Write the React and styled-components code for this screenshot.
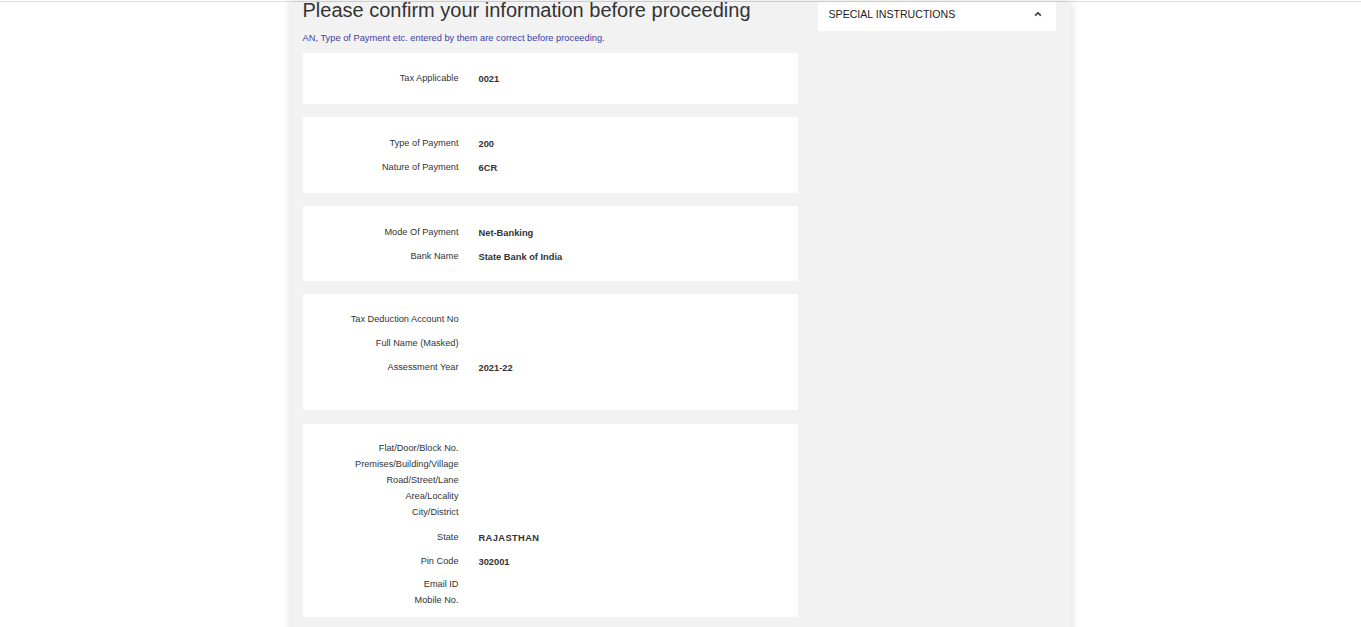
import React from 'react';
import styled, { createGlobalStyle } from 'styled-components';

const GlobalStyle = createGlobalStyle`
  html, body {
    margin: 0;
    padding: 0;
    background: #ffffff;
    font-family: "Liberation Sans", Arial, sans-serif;
    overflow: hidden;
  }
`;

const TopRule = styled.div`
  height: 1px;
  margin-top: 1px;
  background: #dcdcdc;
`;

const Shell = styled.div`
  width: 780px;
  min-height: 640px;
  margin: 0 auto;
  box-sizing: border-box;
  padding: 0 15px 0 12px;
  background: #f2f2f2;
  box-shadow: 0 0 9px rgba(0, 0, 0, 0.16);
  display: flex;
  gap: 20px;
  align-items: flex-start;
`;

const MainCol = styled.div`
  width: 495px;
  flex: none;
`;

const SideCol = styled.div`
  width: 238px;
  flex: none;
`;

const Heading = styled.h1`
  margin: -2px 0 0;
  font-size: 20px;
  line-height: 20px;
  font-weight: 400;
  color: #333333;
  white-space: nowrap;
`;

const Note = styled.p`
  margin: 12px 0 9px;
  font-size: 9.3px;
  line-height: 12px;
  color: #3d3d9e;
  white-space: nowrap;
`;

const Card = styled.section`
  background: #ffffff;
  padding: ${p => p.$top ?? 18}px 0 ${p => p.$bottom ?? 18}px;
  margin-bottom: ${p => p.$after ?? 13}px;
`;

const Row = styled.div`
  display: flex;
  gap: 20px;
  height: 16px;
  margin-top: ${p => p.$space ?? 8}px;
  &:first-child {
    margin-top: 0;
  }
`;

const Label = styled.div`
  width: 156px;
  flex: none;
  text-align: right;
  font-size: 9.2px;
  line-height: 16px;
  color: #333333;
`;

const Value = styled.div`
  font-size: 9.3px;
  line-height: 16px;
  padding-top: 1px;
  font-weight: 700;
  color: #333333;
  letter-spacing: ${p => p.$spread ? '0.4px' : '0'};
`;

const Panel = styled.div`
  background: #ffffff;
  height: 29px;
  box-sizing: border-box;
  padding: 6px 14px 0 11px;
  display: flex;
  align-items: flex-start;
  justify-content: space-between;
  font-size: 10.6px;
  line-height: 12px;
  color: #222222;
`;

const ChevronBox = styled.span`
  display: flex;
  padding-top: 3px;
`;

const Chevron = () => (
  <ChevronBox>
    <svg width="8" height="6" viewBox="0 0 8 6">
      <polyline points="1.2,4.6 4,1.8 6.8,4.6" fill="none" stroke="#333" strokeWidth="1.6" />
    </svg>
  </ChevronBox>
);

const cards = [
  { rows: [['Tax Applicable', '0021']], top: 17, bottom: 18 },
  { rows: [['Type of Payment', '200'], ['Nature of Payment', '6CR']] },
  { rows: [['Mode Of Payment', 'Net-Banking'], ['Bank Name', 'State Bank of India']], bottom: 17 },
  {
    rows: [['Tax Deduction Account No', ''], ['Full Name (Masked)', ''], ['Assessment Year', '2021-22']],
    top: 17,
    bottom: 35,
    after: 14,
  },
  {
    rows: [
      ['Flat/Door/Block No.', ''],
      ['Premises/Building/Village', '', 0],
      ['Road/Street/Lane', '', 0],
      ['Area/Locality', '', 0],
      ['City/District', '', 0],
      ['State', 'RAJASTHAN', 9, true],
      ['Pin Code', '302001', 8],
      ['Email ID', '', 7],
      ['Mobile No.', '', 0],
    ],
    top: 16,
    bottom: 9,
  },
];

export default function App() {
  return (
    <>
      <GlobalStyle />
      <TopRule />
      <Shell>
        <MainCol>
          <Heading>Please confirm your information before proceeding</Heading>
          <Note>AN, Type of Payment etc. entered by them are correct before proceeding.</Note>
          {cards.map((c, i) => (
            <Card key={i} $top={c.top} $bottom={c.bottom} $after={c.after}>
              {c.rows.map(([label, value, space, spread]) => (
                <Row key={label} $space={space}>
                  <Label>{label}</Label>
                  <Value $spread={spread}>{value}</Value>
                </Row>
              ))}
            </Card>
          ))}
        </MainCol>
        <SideCol>
          <Panel>
            <span>SPECIAL INSTRUCTIONS</span>
            <Chevron />
          </Panel>
        </SideCol>
      </Shell>
    </>
  );
}
